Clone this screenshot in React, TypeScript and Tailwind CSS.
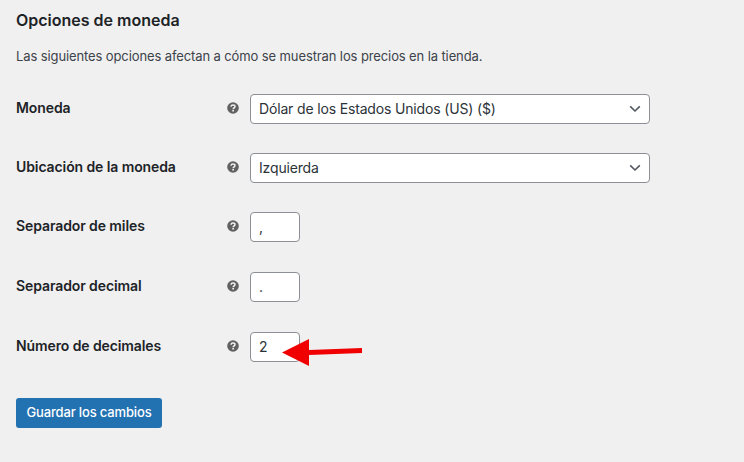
import React from "react";

const font = { fontFamily: '"Inter", "Roboto", "Liberation Sans", sans-serif' };

const HelpIcon = () => (
  <svg width="12" height="12" viewBox="0 0 12 12" className="shrink-0">
    <circle cx="6" cy="6" r="5.8" fill="#616161" />
    <path d="M4 4.7C4.1 3.5 5 2.9 6 2.9c1.2 0 2 .6 2 1.6 0 .8-.5 1.1-1 1.5-.5.3-.8.5-.8 1.2" fill="none" stroke="#f0f0f0" strokeWidth="1.5" />
    <rect x="5.3" y="8" width="1.7" height="1.5" fill="#f0f0f0" />
  </svg>
);

const Chevron = () => (
  <svg width="12" height="8" viewBox="0 0 12 8" className="shrink-0">
    <path d="M1.2 1.4 6 6l4.8-4.6" fill="none" stroke="#50575e" strokeWidth="1.6" />
  </svg>
);

const Row = ({ label, className, children }: { label: string; className?: string; children: React.ReactNode }) => (
  <div className={`flex items-center h-[30px] ${className ?? ""}`}>
    <div className="w-[210.5px] pb-[3px] text-[14px] tracking-[-0.1px] font-semibold text-[#1d2327]">{label}</div>
    <div className="w-[23.5px] pb-[2px] flex"><HelpIcon /></div>
    {children}
  </div>
);

const Select = ({ value }: { value: string }) => (
  <div className="w-[400px] h-[30px] bg-white border border-[#8c8f94] rounded-[4px] flex items-center justify-between pl-2 pr-[8px] text-[14px] tracking-[-0.16px] text-[#2c3338]">
    <span className="pb-[1px]">{value}</span>
    <Chevron />
  </div>
);

const Small = ({ value }: { value: string }) => (
  <div className="w-[50px] h-[30px] bg-white border border-[#8c8f94] rounded-[4px] flex items-center pl-2 pb-[1px] text-[14px] text-[#2c3338]">
    {value}
  </div>
);

export default function App() {
  return (
    <div className="relative w-[744px] h-[462px] overflow-hidden bg-[#f0f0f0] pl-4 pt-[10px]" style={font}>
      <h2 className="text-[16px] leading-[20px] font-semibold text-[#1d2327]">Opciones de moneda</h2>
      <p className="mt-[16px] text-[13px] leading-[20px] tracking-[-0.11px] text-[#3c434a]">
        Las siguientes opciones afectan a cómo se muestran los precios en la tienda.
      </p>
      <div className="mt-[28px] flex flex-col gap-y-[29px]">
        <Row label="Moneda"><Select value="Dólar de los Estados Unidos (US) ($)" /></Row>
        <Row label="Ubicación de la moneda"><Select value="Izquierda" /></Row>
        <Row label="Separador de miles"><Small value="," /></Row>
        <Row label="Separador decimal" className="mt-px"><Small value="." /></Row>
        <Row label="Número de decimales" className="mt-px"><Small value="2" /></Row>
      </div>
      <button className="mt-[36px] h-[30px] w-[146px] rounded-[3px] bg-[#2271b1] text-white text-[13px] tracking-[-0.15px] font-medium">
        Guardar los cambios
      </button>
      <svg width="84" height="30" viewBox="0 0 84 30" className="absolute left-[280px] top-[337px]">
        <path d="M2 15.5 29 2v11l53-2v5l-53 2v11z" fill="#f00000" />
      </svg>
    </div>
  );
}
